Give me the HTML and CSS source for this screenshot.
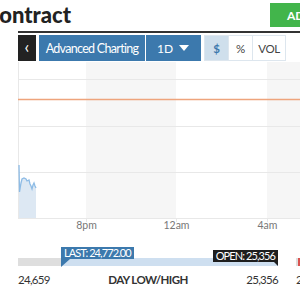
FILE: index.html
```html
<!DOCTYPE html>
<html lang="en">
<head>
    <meta charset="UTF-8">
    <meta name="viewport" content="width=device-width, initial-scale=1.0">
    <title>Contract</title>
    <link rel="stylesheet" href="styles.css">
</head>
<body>

<div class="page">
    <div class="header">
        <h1 class="title">Contract</h1>
        <button class="add-btn">ADD</button>
    </div>
    <div class="rule"></div>

    <div class="toolbar">
        <button class="tb-btn tb-dark">&lsaquo;</button>
        <button class="tb-btn tb-blue tb-wide">Advanced Charting</button>
        <button class="tb-btn tb-blue tb-range">1D <span class="caret"></span></button>
        <div class="toggle">
            <button class="tg-btn tg-active">$</button>
            <button class="tg-btn">%</button>
            <button class="tg-btn tg-vol">VOL</button>
        </div>
    </div>

    <svg class="chart" width="282" height="172" viewBox="0 0 282 172">
        <rect x="68" y="0" width="90" height="157" fill="#f6f6f6"/>
        <rect x="249" y="0" width="40" height="157" fill="#f6f6f6"/>
        <g stroke="#e8e8e8" stroke-width="1">
            <line x1="0" y1="17.5" x2="282" y2="17.5"/>
            <line x1="0" y1="64.5" x2="282" y2="64.5"/>
            <line x1="0" y1="110.5" x2="282" y2="110.5"/>
            <line x1="0" y1="156.5" x2="282" y2="156.5"/>
            <line x1="0.5" y1="0" x2="0.5" y2="157"/>
            <line x1="68.5" y1="156" x2="68.5" y2="160"/>
            <line x1="158.5" y1="156" x2="158.5" y2="160"/>
            <line x1="249.5" y1="156" x2="249.5" y2="160"/>
        </g>
        <line x1="0" y1="37.5" x2="282" y2="37.5" stroke="#eea47c" stroke-width="1.5"/>
        <path d="M1 103 L1.5 130 L3 121 L4 117 L6 116 L8 117 L9 119 L11 118 L12 122 L13 124 L14 127 L15 123 L16 121 L17 124 L18 126 L18 156 L1 156 Z" fill="#dde8f3"/>
        <path d="M1 103 L1.5 130 L3 121 L4 117 L6 116 L8 117 L9 119 L11 118 L12 122 L13 124 L14 127 L15 123 L16 121 L17 124 L18 126" fill="none" stroke="#8dbbe5" stroke-width="1.3"/>
        <g class="axis">
            <text x="68.5" y="167" text-anchor="middle">8pm</text>
            <text x="158.5" y="167" text-anchor="middle">12am</text>
            <text x="249.5" y="167" text-anchor="middle">4am</text>
        </g>
    </svg>

    <div class="ranges">
        <div class="range">
            <div class="range-track">
                <div class="range-low"></div>
                <div class="range-fill"></div>
                <span class="tag tag-last">LAST: 24,772.00</span>
                <span class="tag tag-open">OPEN: 25,356</span>
            </div>
            <div class="range-labels">
                <span>24,659</span>
                <span class="range-name">DAY LOW/HIGH</span>
                <span>25,356</span>
            </div>
        </div>
        <div class="range range-next">
            <div class="range-track">
                <div class="range-low"></div>
                <div class="range-mark"></div>
            </div>
            <div class="range-labels">
                <span>2</span>
            </div>
        </div>
    </div>
</div>

</body>
</html>
```

FILE: styles.css
```css
body {
    margin: 0;
    font-family: 'Lato', 'Liberation Sans', sans-serif;
    background-color: #fff;
    color: #333;
    overflow: hidden;
}
.page {
    width: 282px;
    padding-left: 18px;
}
.header {
    display: flex;
    justify-content: space-between;
    align-items: center;
    height: 31px;
}
.title {
    margin: 0 0 0 -33px;
    font-size: 22px;
    font-weight: 900;
    color: #222;
    line-height: 26px;
    padding-bottom: 2px;
}
.add-btn {
    align-self: flex-start;
    margin-top: 3px;
    margin-right: -42px;
    width: 72px;
    height: 24px;
    padding: 0 0 0 17px;
    text-align: left;
    white-space: nowrap;
    overflow: hidden;
    background-color: #42b54b;
    color: #fff;
    border: none;
    font-family: inherit;
    font-size: 12px;
    font-weight: 700;
}
.rule {
    height: 2px;
    background-color: #333;
    margin-right: -18px;
}
.toolbar {
    display: flex;
    align-items: center;
    height: 26px;
    margin-top: 2px;
}
.tb-btn {
    height: 26px;
    border: none;
    color: #fff;
    font-family: inherit;
    padding: 0;
}
.tb-dark {
    width: 18px;
    background-color: #222;
    font-size: 17px;
    line-height: 20px;
    padding-bottom: 3px;
    margin-right: 3px;
}
.tb-blue {
    background-color: #3c79ad;
    font-size: 12.5px;
    letter-spacing: -0.7px;
}
.tb-wide {
    width: 106px;
    margin-right: 1px;
}
.tb-range {
    width: 55px;
    display: flex;
    align-items: center;
    justify-content: space-between;
    padding: 0 12px 0 11px;
    font-size: 12px;
    letter-spacing: 0;
}
.caret {
    width: 0;
    height: 0;
    border-left: 5px solid transparent;
    border-right: 5px solid transparent;
    border-top: 6px solid #fff;
}
.toggle {
    display: flex;
    margin-left: 3px;
    border: 1px solid #dde6ee;
    height: 24px;
}
.tg-btn {
    width: 24px;
    height: 24px;
    padding: 0;
    border: none;
    border-right: 1px solid #dde6ee;
    background-color: #fff;
    color: #444;
    font-family: inherit;
    font-size: 11.5px;
    letter-spacing: -0.4px;
}
.tg-btn:last-child {
    border-right: none;
}
.tg-active {
    background-color: #cfdfec;
    color: #3c79ad;
    font-weight: 700;
}
.tg-vol {
    width: 32px;
}
.chart {
    display: block;
    margin-top: 1px;
    overflow: visible;
}
.axis text {
    font-family: 'Lato', 'Liberation Sans', sans-serif;
    font-size: 10.5px;
    fill: #777;
}
.ranges {
    display: flex;
    gap: 18px;
    margin-top: 24px;
}
.range {
    flex: 0 0 260px;
}
.range-track {
    position: relative;
    display: flex;
    height: 8px;
}
.range-low {
    width: 43px;
    background-color: #dedede;
}
.range-fill {
    flex: 1;
    background-color: #cedff0;
}
.range-mark {
    width: 3px;
    background-color: #d9534f;
}
.tag {
    position: absolute;
    bottom: 7px;
    height: 12px;
    line-height: 12px;
    padding: 0 3px;
    font-size: 11px;
    letter-spacing: -0.9px;
    color: #fff;
    white-space: nowrap;
}
.tag-last {
    left: 43px;
    background-color: #3c79ad;
}
.tag-last::after {
    content: '';
    position: absolute;
    left: 0;
    top: 12px;
    border-top: 8px solid #3c79ad;
    border-right: 9px solid transparent;
}
.tag-open {
    right: 0;
    bottom: 4px;
    background-color: #1e1e1e;
}
.tag-open::after {
    content: '';
    position: absolute;
    right: 0;
    top: 12px;
    border-top: 4px solid #1e1e1e;
    border-left: 4px solid transparent;
}
.range-labels {
    display: flex;
    justify-content: space-between;
    margin-top: 7px;
    font-size: 11.5px;
    letter-spacing: -0.7px;
    color: #333;
}
.range-name {
    font-weight: 700;
    letter-spacing: -0.6px;
}
.range-next .range-low {
    width: 2px;
}
```
